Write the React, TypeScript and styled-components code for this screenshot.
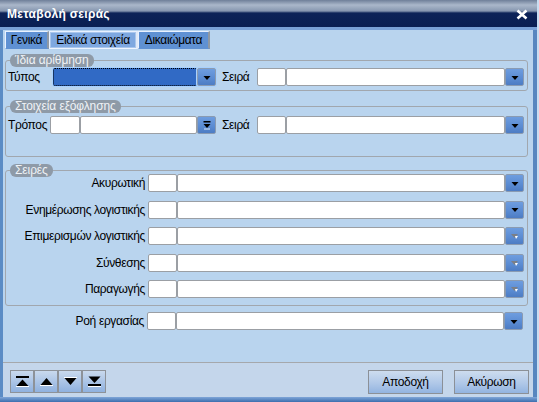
import styled, { createGlobalStyle } from "styled-components";

const Global = createGlobalStyle`
  html, body {
    margin: 0;
    padding: 0;
    background: #c9ddf1;
  }
  body {
    font-family: "Liberation Sans", Arial, sans-serif;
    font-size: 12px;
    letter-spacing: -0.35px;
    color: #000;
  }
`;

const Window = styled.div`
  width: 537px;
  height: 402px;
  display: flex;
  flex-direction: column;
  background: #b9d4ee;
`;

const TitleBar = styled.div`
  height: 30px;
  flex: none;
  box-sizing: border-box;
  display: flex;
  align-items: center;
  justify-content: space-between;
  padding: 1px 9px 0 7px;
  border-bottom: 3px solid #79a1d6;
  background: linear-gradient(
    to bottom,
    #6f7f99 0px,
    #aab7ca 5px,
    #8797b0 11px,
    #0d2358 13px,
    #0a1f52 27px
  );
`;

const Title = styled.span`
  color: #fff;
  font-weight: bold;
  font-size: 12px;
  letter-spacing: 0.3px;
`;

const Middle = styled.div`
  flex: 1;
  display: flex;
  flex-direction: column;
  border-left: 3px solid #5b8cc5;
  border-right: 4px solid #5786bf;
  min-height: 0;
`;

const BottomEdge = styled.div`
  height: 5px;
  flex: none;
  background: linear-gradient(to bottom, #7fa6d8, #3d6eae);
`;

const Content = styled.div`
  flex: 1;
  padding: 1px 5px 0 2px;
`;

const Tabs = styled.div`
  display: flex;
  height: 18px;
`;

const Tab = styled.div<{ $w: number; $hover?: boolean }>`
  width: ${(p) => p.$w}px;
  box-sizing: border-box;
  display: flex;
  align-items: center;
  justify-content: center;
  background: ${(p) => (p.$hover ? "#7ea8e0" : "#5f91d3")};
  border: 1px solid ${(p) => (p.$hover ? "#eef5ff" : "#5f91d3")};
  border-top-color: #e8f1ff;
  border-left-color: #e8f1ff;
  border-right: 2px solid ${(p) => (p.$hover ? "#dfe9f7" : "#8e98a4")};
  ${(p) => p.$hover && "box-shadow: inset 0 0 0 1px #a9c6ec;"}
`;

const Group = styled.div<{ $mt: number; $pt: number; $pb: number }>`
  position: relative;
  margin-top: ${(p) => p.$mt}px;
  padding: ${(p) => p.$pt}px 3px ${(p) => p.$pb}px 0;
  border: 1px solid #a1a7ae;
  border-radius: 3px;
`;

const Legend = styled.span`
  position: absolute;
  top: -7px;
  left: 4px;
  height: 13px;
  line-height: 13px;
  padding: 0 5px;
  letter-spacing: -0.1px;
  color: #eef2f6;
  background: #8e9aa7;
  border-radius: 6px;
`;

const Rows = styled.div`
  display: flex;
  flex-direction: column;
  gap: 8.5px;
`;

const Row = styled.div<{ $mt?: number; $pr?: number }>`
  display: flex;
  align-items: center;
  height: 18px;
  margin-top: ${(p) => p.$mt ?? 0}px;
  padding-right: ${(p) => p.$pr ?? 0}px;
`;

const Label = styled.span<{ $w: number; $right?: boolean; $pl?: number }>`
  width: ${(p) => p.$w}px;
  flex: none;
  box-sizing: border-box;
  text-align: ${(p) => (p.$right ? "right" : "left")};
  padding: ${(p) => (p.$right ? "0 3px 0 0" : `0 0 0 ${p.$pl ?? 0}px`)};
  white-space: nowrap;
`;

const Box = styled.div<{ $w?: number; $focus?: boolean }>`
  height: 18px;
  box-sizing: border-box;
  ${(p) => (p.$w ? `width: ${p.$w}px; flex: none;` : "flex: 1;")}
  background: ${(p) => (p.$focus ? "#316ac5" : "#fff")};
  border: 1px ${(p) => (p.$focus ? "dotted #000" : "solid #9b9fa4")};
  border-radius: 2px;
  ${(p) => p.$focus && "box-shadow: 0 0 0 1px #a8d1ff;"}
`;

const DropBtn = styled.div<{ $focus?: boolean }>`
  width: 19px;
  height: 18px;
  flex: none;
  box-sizing: border-box;
  display: flex;
  align-items: center;
  justify-content: center;
  padding-top: 2px;
  background: linear-gradient(to bottom, #6e9ddf, #5a8bd2 60%, #4d7cc3);
  border: 1px solid #8a9bb2;
  border-radius: 2px;
  ${(p) => p.$focus && "box-shadow: 0 0 0 1px #a8d1ff;"}
`;

const Combo = styled.div<{ $w?: number }>`
  display: flex;
  ${(p) => (p.$w ? `width: ${p.$w}px; flex: none;` : "flex: 1;")}
`;

const Footer = styled.div`
  height: 35px;
  flex: none;
  box-sizing: border-box;
  display: flex;
  justify-content: space-between;
  align-items: flex-start;
  padding: 7px 4px 0 7px;
  background: #c4d6eb;
  border-top: 1px solid #a5a8ac;
`;

const NavGroup = styled.div`
  display: flex;
`;

const NavButton = styled.div`
  width: 24px;
  height: 23px;
  box-sizing: border-box;
  display: flex;
  align-items: center;
  justify-content: center;
  border: 1px solid #8d9299;
  background: linear-gradient(to bottom, #c9d9ed, #a9c3e6 55%, #8fb1df);
`;

const Actions = styled.div`
  display: flex;
  gap: 11px;
`;

const ActionButton = styled.div`
  width: 75px;
  height: 24px;
  box-sizing: border-box;
  display: flex;
  align-items: center;
  justify-content: center;
  border: 1px solid #8b9097;
  background: linear-gradient(to bottom, #cddcee, #b0c8e8 55%, #93b4e0);
`;

type ArrowKind = "down" | "disabled" | "double";

function Arrow({ kind }: { kind: ArrowKind }) {
  if (kind === "disabled") {
    return (
      <svg width="8" height="6" viewBox="0 0 8 6">
        <polygon points="0,0 7,0 3.5,4" fill="#7b7f86" />
        <polygon points="4,2 7,2 5,5" fill="#fff" />
      </svg>
    );
  }
  if (kind === "double") {
    return (
      <svg width="8" height="9" viewBox="0 0 8 9" style={{ marginTop: -2 }}>
        <rect x="0.5" y="0" width="7" height="1.5" fill="#000" />
        <polygon points="0.5,3 7.5,3 4,7" fill="#000" />
        <rect x="1" y="7.5" width="6" height="1" fill="#d8e6f8" />
      </svg>
    );
  }
  return (
    <svg width="8" height="5" viewBox="0 0 8 5">
      <polygon points="0.5,0 7.5,0 4,4" fill="#000" />
    </svg>
  );
}

function Field({
  code,
  main,
  kind = "down",
  focus,
}: {
  code?: number | boolean;
  main?: number;
  kind?: ArrowKind;
  focus?: boolean;
}) {
  return (
    <>
      {code && <Box $w={typeof code === "number" ? code : 29} />}
      <Box $w={main} $focus={focus} />
      <DropBtn $focus={focus}>
        <Arrow kind={kind} />
      </DropBtn>
    </>
  );
}

function NavIcon({ dir }: { dir: "first" | "up" | "down" | "last" }) {
  return (
    <svg width="13" height="11" viewBox="0 0 13 11">
      {dir === "first" && (
        <>
          <rect x="0" y="0" width="13" height="2" fill="#000" />
          <polygon points="0.5,10 12.5,10 6.5,3.5" fill="#000" />
          <rect x="0" y="10" width="13" height="1" fill="#fff" />
        </>
      )}
      {dir === "up" && (
        <>
          <polygon points="0.5,9 12.5,9 6.5,2" fill="#000" />
          <rect x="0" y="9" width="13" height="1" fill="#fff" />
        </>
      )}
      {dir === "down" && (
        <>
          <rect x="0" y="1" width="13" height="1" fill="#fff" />
          <polygon points="0.5,2 12.5,2 6.5,9" fill="#000" />
        </>
      )}
      {dir === "last" && (
        <>
          <polygon points="0.5,0.5 12.5,0.5 6.5,7" fill="#000" />
          <rect x="0" y="8" width="13" height="2" fill="#000" />
          <rect x="0" y="10" width="13" height="1" fill="#fff" />
        </>
      )}
    </svg>
  );
}

const seriesRows: { label: string; kind: ArrowKind }[] = [
  { label: "Ακυρωτική", kind: "down" },
  { label: "Ενημέρωσης λογιστικής", kind: "down" },
  { label: "Επιμερισμών λογιστικής", kind: "disabled" },
  { label: "Σύνθεσης", kind: "disabled" },
  { label: "Παραγωγής", kind: "disabled" },
];

export default function App() {
  return (
    <>
      <Global />
      <Window>
        <TitleBar>
          <Title>Μεταβολή σειράς</Title>
          <svg width="12" height="11" viewBox="0 0 12 11">
            <path d="M1.5 1.5 L10.5 9.5 M10.5 1.5 L1.5 9.5" stroke="#fff" strokeWidth="2.6" />
          </svg>
        </TitleBar>
        <Middle>
          <Content>
            <Tabs>
              <Tab $w={44}>Γενικά</Tab>
              <Tab $w={89} $hover>
                Ειδικά στοιχεία
              </Tab>
              <Tab $w={72}>Δικαιώματα</Tab>
            </Tabs>

            <Group $mt={11} $pt={7} $pb={4}>
              <Legend>Ίδια αρίθμηση</Legend>
              <Row>
                <Label $w={47} $pl={2}>
                  Τύπος
                </Label>
                <Combo $w={163}>
                  <Field main={144} focus />
                </Combo>
                <Label $w={41} $pl={6}>
                  Σειρά
                </Label>
                <Combo>
                  <Field code />
                </Combo>
              </Row>
            </Group>

            <Group $mt={15} $pt={9} $pb={22}>
              <Legend>Στοιχεία εξόφλησης</Legend>
              <Row>
                <Label $w={44} $pl={2}>
                  Τρόπος
                </Label>
                <Combo $w={166}>
                  <Field code={30} kind="double" />
                </Combo>
                <Label $w={41} $pl={6}>
                  Σειρά
                </Label>
                <Combo>
                  <Field code />
                </Combo>
              </Row>
            </Group>

            <Group $mt={13} $pt={3} $pb={7}>
              <Legend>Σειρές</Legend>
              <Rows>
                {seriesRows.map((r) => (
                  <Row key={r.label}>
                    <Label $w={142} $right>
                      {r.label}
                    </Label>
                    <Field code kind={r.kind} />
                  </Row>
                ))}
              </Rows>
            </Group>

            <Row $mt={6} $pr={5}>
              <Label $w={142} $right>
                Ροή εργασίας
              </Label>
              <Field code />
            </Row>
          </Content>

          <Footer>
            <NavGroup>
              <NavButton>
                <NavIcon dir="first" />
              </NavButton>
              <NavButton>
                <NavIcon dir="up" />
              </NavButton>
              <NavButton>
                <NavIcon dir="down" />
              </NavButton>
              <NavButton>
                <NavIcon dir="last" />
              </NavButton>
            </NavGroup>
            <Actions>
              <ActionButton>Αποδοχή</ActionButton>
              <ActionButton>Ακύρωση</ActionButton>
            </Actions>
          </Footer>
        </Middle>
        <BottomEdge />
      </Window>
    </>
  );
}
